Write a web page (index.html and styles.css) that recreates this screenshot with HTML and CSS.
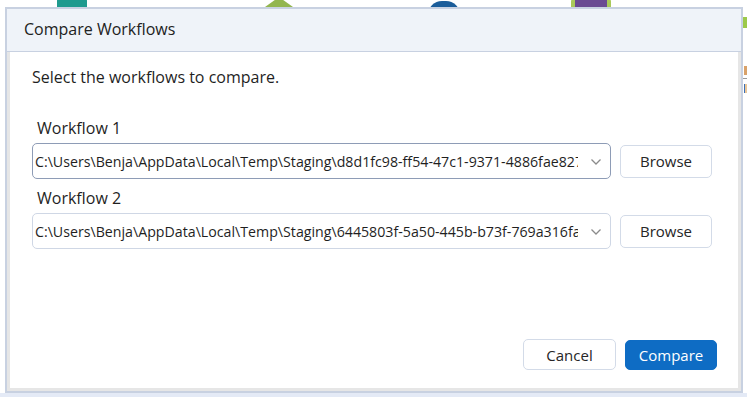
FILE: index.html
```html
<!DOCTYPE html>
<html lang="en">

<head>
    <meta charset="UTF-8">
    <meta name="viewport" content="width=device-width, initial-scale=1.0">
    <title>Compare Workflows</title>
    <link rel="stylesheet" href="styles.css">
</head>

<body>
    <div class="backdrop-top">
        <span class="tool tool-teal"></span>
        <span class="tool tool-green"></span>
        <span class="tool tool-blue"></span>
        <span class="tool tool-purple"></span>
    </div>

    <div class="stage">
        <div class="dialog">
            <div class="dialog-title">Compare Workflows</div>

            <div class="dialog-body">
                <p class="intro">Select the workflows to compare.</p>

                <div class="field">
                    <label for="wf1">Workflow 1</label>
                    <div class="field-row">
                        <div class="combo combo-focus">
                            <input type="text" id="wf1" value="C:\Users\Benja\AppData\Local\Temp\Staging\d8d1fc98-ff54-47c1-9371-4886fae827f0.yxmd">
                            <svg class="chevron" width="12" height="8" viewBox="0 0 12 8">
                                <path d="M1.5 1.5 L6 6 L10.5 1.5" fill="none" stroke="#8b8b8b" stroke-width="1.3" />
                            </svg>
                        </div>
                        <button class="btn">Browse</button>
                    </div>
                </div>

                <div class="field">
                    <label for="wf2">Workflow 2</label>
                    <div class="field-row">
                        <div class="combo">
                            <input type="text" id="wf2" value="C:\Users\Benja\AppData\Local\Temp\Staging\6445803f-5a50-445b-b73f-769a316fa">
                            <svg class="chevron" width="12" height="8" viewBox="0 0 12 8">
                                <path d="M1.5 1.5 L6 6 L10.5 1.5" fill="none" stroke="#8b8b8b" stroke-width="1.3" />
                            </svg>
                        </div>
                        <button class="btn">Browse</button>
                    </div>
                </div>

                <div class="dialog-footer">
                    <button class="btn btn-cancel">Cancel</button>
                    <button class="btn btn-primary">Compare</button>
                </div>
            </div>
        </div>

        <div class="side-strip">
            <span class="side-green"></span>
            <span class="side-mark side-orange"></span>
            <span class="side-rule"></span>
            <span class="side-mark side-blue"></span>
        </div>
    </div>

    <div class="backdrop-bottom"></div>
</body>

</html>
```

FILE: styles.css
```css
* {
    box-sizing: border-box;
}

body {
    margin: 0;
    width: 747px;
    height: 397px;
    overflow: hidden;
    background-color: #ffffff;
    font-family: "Open Sans", "Noto Sans", sans-serif;
    color: #1f1f1f;
}

.backdrop-top {
    display: flex;
    align-items: flex-end;
    height: 7px;
    overflow: hidden;
}

.tool {
    display: block;
    height: 9px;
}

.tool-teal {
    width: 30px;
    margin-left: 57px;
    background-color: #1e9a8e;
    border-radius: 3px 3px 0 0;
}

.tool-green {
    width: 0;
    height: 0;
    margin-left: 178px;
    border-left: 14px solid transparent;
    border-right: 14px solid transparent;
    border-bottom: 10px solid #93b64f;
}

.tool-blue {
    width: 32px;
    height: 14px;
    margin-left: 135px;
    background-color: #1b5d9a;
    border-radius: 16px 16px 0 0;
    align-self: flex-start;
    margin-top: 1px;
}

.tool-purple {
    width: 40px;
    margin-left: 111px;
    background-color: #6a4a92;
    border-left: 4px solid #a9c95a;
    border-right: 4px solid #a9c95a;
    border-radius: 4px 4px 0 0;
}

.stage {
    display: flex;
    height: 386px;
    padding-left: 5px;
}

.dialog {
    display: flex;
    flex-direction: column;
    width: 738px;
    height: 386px;
    border: 2px solid #c8d1e1;
    background-color: #ffffff;
}

.dialog-title {
    height: 43px;
    padding: 9px 0 0 17px;
    background-color: #eff3f9;
    border-bottom: 1px solid #c8d1e1;
    font-size: 16px;
    color: #222222;
}

.dialog-body {
    flex: 1;
    display: flex;
    flex-direction: column;
    padding: 14px 24px 0 22px;
    border: 3px solid #e6e6e6;
    border-top: 0;
}

.intro {
    margin: 0 0 30px 0;
    font-size: 16px;
    line-height: 22px;
}

.field {
    display: flex;
    flex-direction: column;
}

.field label {
    margin-left: 5px;
    margin-bottom: 5px;
    font-size: 16px;
    line-height: 20px;
}

.field-row {
    display: flex;
    align-items: center;
    gap: 9px;
    margin-bottom: 9px;
}

.combo {
    display: flex;
    align-items: center;
    width: 579px;
    height: 36px;
    border: 1px solid #cfd7e5;
    border-radius: 5px;
    background-color: #ffffff;
    overflow: hidden;
}

.combo-focus {
    border-color: #8e9cb6;
}

.combo input {
    flex: 1;
    min-width: 0;
    height: 100%;
    padding: 0 0 0 2px;
    border: 0;
    outline: none;
    background: transparent;
    font-family: "Open Sans", "Noto Sans", sans-serif;
    font-size: 14.2px;
    color: #1f1f1f;
}

.chevron {
    flex: none;
    margin: 2px 8px 0 12px;
}

.btn {
    width: 92px;
    height: 33px;
    border: 1px solid #d3dbe8;
    border-radius: 5px;
    background-color: #ffffff;
    font-family: "Open Sans", "Noto Sans", sans-serif;
    font-size: 15px;
    color: #262626;
    cursor: pointer;
}

.dialog-footer {
    display: flex;
    justify-content: flex-end;
    align-items: center;
    gap: 9px;
    margin-top: auto;
    margin-bottom: 18px;
    margin-right: -3px;
}

.btn-cancel {
    width: 93px;
    height: 31px;
}

.btn-primary {
    width: 92px;
    height: 30px;
    border-color: #0e6cc4;
    background-color: #0e6cc4;
    color: #ffffff;
}

.side-strip {
    display: flex;
    flex-direction: column;
    width: 4px;
    overflow: hidden;
}

.side-green {
    display: block;
    height: 11px;
    margin-top: 10px;
    background-color: #9cc94a;
}

.side-mark {
    display: block;
    width: 3px;
    height: 9px;
    margin-left: 1px;
}

.side-orange {
    margin-top: 38px;
    background-color: #d9a26a;
}

.side-rule {
    display: block;
    height: 1px;
    margin-top: 3px;
    background-color: #9a9a9a;
}

.side-blue {
    margin-top: 5px;
    border-left: 1px solid #3b6fb5;
    background-color: #e9c79a;
}

.backdrop-bottom {
    height: 4px;
    background-color: #e4eaf6;
}
```
